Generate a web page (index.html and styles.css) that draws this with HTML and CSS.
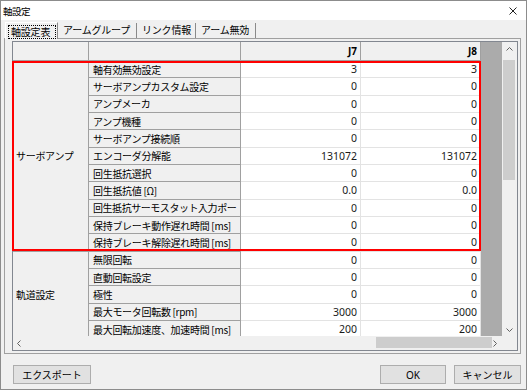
FILE: index.html
```html
<!DOCTYPE html>
<html lang="ja">
<head>
  <meta charset="UTF-8">
  <link rel="stylesheet" href="styles.css">
</head>
<body>
  <div class="window">
    <div class="titlebar">
      <span class="title">軸設定</span>
      <svg class="close" width="8" height="8" viewBox="0 0 8 8"><path d="M0.5 0.5L7.5 7.5M7.5 0.5L0.5 7.5" stroke="#222" stroke-width="1"/></svg>
    </div>

    <div class="tabs">
      <div class="tab active"><span class="focus">軸設定表</span></div>
      <div class="tab">アームグループ</div>
      <div class="tab">リンク情報</div>
      <div class="tab">アーム無効</div>
    </div>

    <div class="panel">
      <div class="grid">
        <div class="view">
          <table>
            <colgroup>
              <col class="c-group"><col class="c-name"><col class="c-val"><col class="c-val">
            </colgroup>
            <tr class="head">
              <th></th><th></th><th>J7</th><th>J8</th>
            </tr>
            <tr>
              <td class="group" rowspan="11">サーボアンプ</td>
              <td class="name">軸有効無効設定</td><td class="val">3</td><td class="val">3</td>
            </tr>
            <tr><td class="name">サーボアンプカスタム設定</td><td class="val">0</td><td class="val">0</td></tr>
            <tr><td class="name">アンプメーカ</td><td class="val">0</td><td class="val">0</td></tr>
            <tr><td class="name">アンプ機種</td><td class="val">0</td><td class="val">0</td></tr>
            <tr><td class="name">サーボアンプ接続順</td><td class="val">0</td><td class="val">0</td></tr>
            <tr><td class="name">エンコーダ分解能</td><td class="val">131072</td><td class="val">131072</td></tr>
            <tr><td class="name">回生抵抗選択</td><td class="val">0</td><td class="val">0</td></tr>
            <tr><td class="name">回生抵抗値 [Ω]</td><td class="val">0.0</td><td class="val">0.0</td></tr>
            <tr><td class="name tight">回生抵抗サーモスタット入力ポー</td><td class="val">0</td><td class="val">0</td></tr>
            <tr><td class="name">保持ブレーキ動作遅れ時間 [ms]</td><td class="val">0</td><td class="val">0</td></tr>
            <tr><td class="name">保持ブレーキ解除遅れ時間 [ms]</td><td class="val">0</td><td class="val">0</td></tr>
            <tr>
              <td class="group" rowspan="5">軌道設定</td>
              <td class="name">無限回転</td><td class="val">0</td><td class="val">0</td>
            </tr>
            <tr><td class="name">直動回転設定</td><td class="val">0</td><td class="val">0</td></tr>
            <tr><td class="name">極性</td><td class="val">0</td><td class="val">0</td></tr>
            <tr><td class="name">最大モータ回転数 [rpm]</td><td class="val">3000</td><td class="val">3000</td></tr>
            <tr><td class="name">最大回転加速度、加速時間 [ms]</td><td class="val">200</td><td class="val">200</td></tr>
          </table>
        </div>

        <div class="vscroll">
          <svg class="arrow" width="7" height="4" viewBox="0 0 7 4"><path d="M0.5 3.5L3.5 0.5L6.5 3.5" fill="none" stroke="#606060"/></svg>
          <div class="vtrack"><div class="vthumb"></div></div>
          <svg class="arrow" width="7" height="4" viewBox="0 0 7 4"><path d="M0.5 0.5L3.5 3.5L6.5 0.5" fill="none" stroke="#606060"/></svg>
        </div>

        <div class="hscroll">
          <svg class="arrow" width="4" height="7" viewBox="0 0 4 7"><path d="M3.5 0.5L0.5 3.5L3.5 6.5" fill="none" stroke="#606060"/></svg>
          <div class="htrack"><div class="hthumb"></div></div>
          <svg class="arrow" width="4" height="7" viewBox="0 0 4 7"><path d="M0.5 0.5L3.5 3.5L0.5 6.5" fill="none" stroke="#606060"/></svg>
        </div>
        <div class="corner"></div>

        <div class="highlight"></div>
      </div>
    </div>

    <div class="footer">
      <button class="btn export">エクスポート</button>
      <span class="spacer"></span>
      <button class="btn ok">OK</button>
      <button class="btn cancel">キャンセル</button>
    </div>
  </div>
</body>
</html>
```

FILE: styles.css
```css
* {
  box-sizing: border-box;
}

body {
  margin: 0;
  font-family: "Noto Sans CJK JP", "Noto Sans", sans-serif;
  font-size: 10px;
  color: #000;
}

.window {
  width: 527px;
  height: 390px;
  border: 1px solid #8c8c8c;
  background: #f0f0f0;
  display: flex;
  flex-direction: column;
}

.titlebar {
  height: 19px;
  background: #fff;
  display: flex;
  align-items: center;
  justify-content: space-between;
  padding: 0 9px 0 2px;
}

.title {
  font-size: 9.5px;
  letter-spacing: -0.5px;
}

/* tabs */
.tabs {
  display: flex;
  align-items: flex-end;
  height: 18px;
  margin-left: 4px;
}

.tab {
  height: 15px;
  line-height: 14px;
  padding: 0 3px 0 5px;
  border-right: 1px solid #8a8a8a;
  letter-spacing: -0.2px;
  white-space: nowrap;
}

.tab:nth-child(2) { width: 79px; }
.tab:nth-child(3) { width: 59px; }
.tab:nth-child(4) { width: 60px; }

.tab.active {
  height: 17px;
  width: 53px;
  padding: 2px 1px 0 2px;
  border-left: 1px solid #fff;
  border-top: 1px solid #fff;
  position: relative;
  z-index: 1;
  margin-bottom: -1px;
  background: #f0f0f0;
}

.focus {
  display: block;
  border: 1px dotted #000;
  line-height: 12px;
  padding: 0 2px;
}

/* panel */
.panel {
  height: 316px;
  margin: 0 5px 0 3px;
  border: 1px solid #a0a0a0;
  padding: 2px 2px 2px 7px;
}

.grid {
  position: relative;
  width: 506px;
  height: 310px;
  border: 1px solid #828790;
  display: grid;
  grid-template-columns: 489px 15px;
  grid-template-rows: 294px 14px;
}

.view {
  background: #ababab;
  overflow: hidden;
}

table {
  border-collapse: separate;
  border-spacing: 0;
  table-layout: fixed;
  width: 468px;
}

.c-group { width: 76px; }
.c-name { width: 152px; }
.c-val { width: 120px; }

th, td {
  padding: 0 3px;
  height: 17.33px;
  border-right: 1px solid #a0a0a0;
  border-bottom: 1px solid #a0a0a0;
  white-space: nowrap;
  overflow: hidden;
}

.head th {
  height: 19px;
  background: #f0f0f0;
  text-align: right;
  font-family: "Noto Sans", sans-serif;
  font-size: 10px;
  font-weight: bold;
}

.group {
  background: #f0f0f0;
  vertical-align: middle;
  letter-spacing: -0.3px;
}

.name {
  background: #f0f0f0;
  padding-left: 4px;
  letter-spacing: -0.3px;
  line-height: 15px;
}

.name.tight {
  padding-right: 0;
  letter-spacing: -0.45px;
}

.val {
  background: #fff;
  text-align: right;
  font-family: "Noto Sans", sans-serif;
  font-size: 10.5px;
  color: #1a1a1a;
  border-color: #e3e3e3;
}

/* scrollbars */
.vscroll {
  background: #f0f0f0;
  display: flex;
  flex-direction: column;
  align-items: center;
  padding: 5px 0 4px;
}

.vtrack {
  flex: 1;
  width: 100%;
  padding: 9px 2px 0 1px;
}

.vthumb {
  height: 120px;
  background: #cdcdcd;
}

.hscroll {
  background: #f0f0f0;
  display: flex;
  align-items: center;
  padding: 0 5px 0 4px;
}

.htrack {
  flex: 1;
  height: 100%;
  padding: 1px 0 2px 355px;
}

.hthumb {
  width: 116px;
  height: 100%;
  background: #cdcdcd;
}

.corner {
  background: #f0f0f0;
}

.highlight {
  position: absolute;
  left: -1px;
  top: 19px;
  width: 469px;
  height: 190px;
  border: 2px solid #ff0000;
  pointer-events: none;
}

/* footer */
.footer {
  display: flex;
  padding: 11px 5px 0 12px;
  gap: 8px;
}

.spacer {
  flex: 1;
}

.btn {
  height: 19px;
  padding: 0;
  border: 1px solid #adadad;
  background: #e1e1e1;
  font-family: "Noto Sans CJK JP", "Noto Sans", sans-serif;
  font-size: 10px;
  color: #000;
}

.export { width: 78px; }
.ok { width: 66px; font-family: "Noto Sans", sans-serif; }
.cancel { width: 67px; }
```
